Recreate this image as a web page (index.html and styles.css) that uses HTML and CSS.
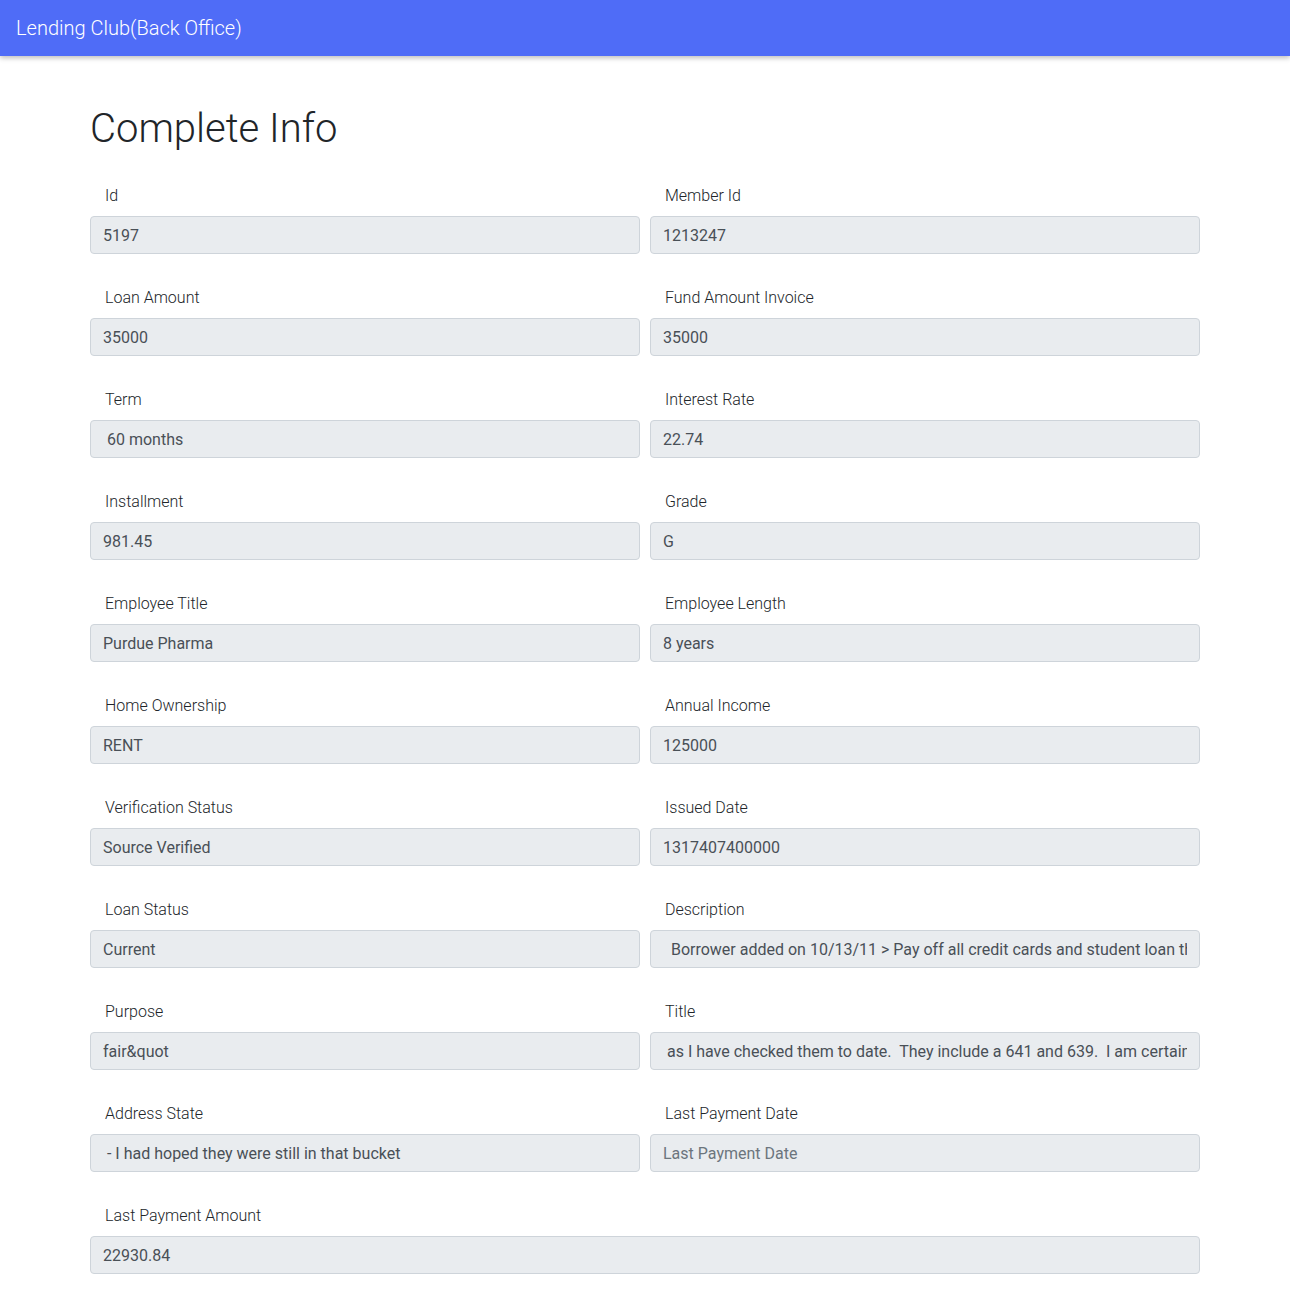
FILE: index.html
```html
<!DOCTYPE html>
<html lang="en">
<head>
<meta charset="utf-8">
<title>Lending Club(Back Office)</title>
<link rel="stylesheet" href="styles.css">
</head>
<body>
<nav class="navbar"><span class="brand">Lending Club(Back Office)</span></nav>
<main class="container">
  <h1 class="title">Complete Info</h1>
  <div class="grid">
    <div class="field"><label>Id</label><input class="input" readonly value="5197"></div>
    <div class="field"><label>Member Id</label><input class="input" readonly value="1213247"></div>
    <div class="field"><label>Loan Amount</label><input class="input" readonly value="35000"></div>
    <div class="field"><label>Fund Amount Invoice</label><input class="input" readonly value="35000"></div>
    <div class="field"><label>Term</label><input class="input" readonly value=" 60 months"></div>
    <div class="field"><label>Interest Rate</label><input class="input" readonly value="22.74"></div>
    <div class="field"><label>Installment</label><input class="input" readonly value="981.45"></div>
    <div class="field"><label>Grade</label><input class="input" readonly value="G"></div>
    <div class="field"><label>Employee Title</label><input class="input" readonly value="Purdue Pharma"></div>
    <div class="field"><label>Employee Length</label><input class="input" readonly value="8 years"></div>
    <div class="field"><label>Home Ownership</label><input class="input" readonly value="RENT"></div>
    <div class="field"><label>Annual Income</label><input class="input" readonly value="125000"></div>
    <div class="field"><label>Verification Status</label><input class="input" readonly value="Source Verified"></div>
    <div class="field"><label>Issued Date</label><input class="input" readonly value="1317407400000"></div>
    <div class="field"><label>Loan Status</label><input class="input" readonly value="Current"></div>
    <div class="field"><label>Description</label><input class="input" readonly value="  Borrower added on 10/13/11 &gt; Pay off all credit cards and student loan that are currently in collections"></div>
    <div class="field"><label>Purpose</label><input class="input" readonly value="fair&amp;quot"></div>
    <div class="field"><label>Title</label><input class="input" readonly value=" as I have checked them to date.  They include a 641 and 639.  I am certain"></div>
    <div class="field"><label>Address State</label><input class="input" readonly value=" - I had hoped they were still in that bucket"></div>
    <div class="field"><label>Last Payment Date</label><input class="input" readonly placeholder="Last Payment Date"></div>
    <div class="field wide"><label>Last Payment Amount</label><input class="input" readonly value="22930.84"></div>
  </div>
</main>
</body>
</html>
```
FILE: styles.css
```css
* { box-sizing: border-box; }
html, body { margin: 0; padding: 0; }
body {
  font-family: Roboto, "Noto Sans", sans-serif;
  font-size: 16px;
  line-height: 1.5;
  color: #212529;
  background: #fff;
}
.navbar {
  height: 56px;
  background: #4f6cf7;
  display: flex;
  align-items: center;
  padding: 0 16px;
  box-shadow: 0 2px 5px rgba(0, 0, 0, 0.26);
}
.brand {
  color: #fff;
  font-size: 20px;
  font-weight: 300;
  line-height: 30px;
}
.container {
  width: 1110px;
  margin: 0 auto;
  padding-top: 49px;
}
.title {
  margin: 0 0 31px 0;
  font-size: 40px;
  font-weight: 300;
  line-height: 48px;
  color: #212529;
}
.grid {
  display: grid;
  grid-template-columns: 1fr 1fr;
  column-gap: 10px;
  row-gap: 31px;
}
.field { display: flex; flex-direction: column; }
.field.wide { grid-column: 1 / span 2; }
.field label {
  display: block;
  padding-left: 15px;
  margin-bottom: 8px;
  font-weight: 300;
  line-height: 24px;
  color: #212529;
}
.input {
  display: block;
  width: 100%;
  height: 38px;
  margin-bottom: 1px;
  padding: 6px 12px;
  font-family: Roboto, "Noto Sans", sans-serif;
  font-size: 16px;
  line-height: 24px;
  color: #495057;
  background: #e9ecef;
  border: 1px solid #ced4da;
  border-radius: 4px;
  outline: none;
}
.input::placeholder { color: #6c757d; opacity: 1; }
```
